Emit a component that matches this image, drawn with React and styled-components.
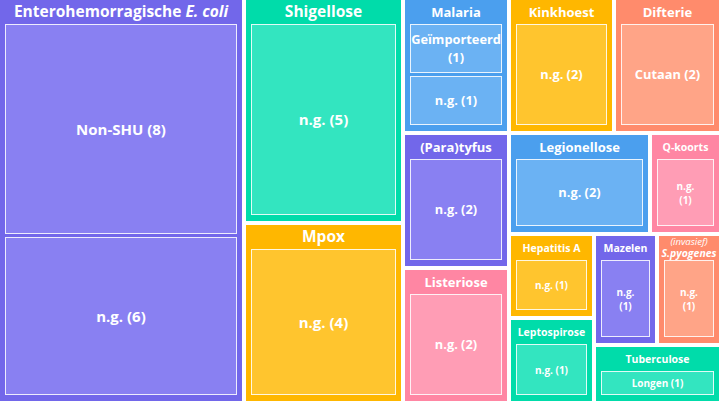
import React from "react";
import styled, { createGlobalStyle } from "styled-components";

const GlobalStyle = createGlobalStyle`
  html, body {
    margin: 0;
    padding: 0;
    background: #ffffff;
  }
  body {
    font-family: "Open Sans", "Liberation Sans", sans-serif;
  }
`;

const tones = {
  purple: { outer: "#7267ea", inner: "#8980f2" },
  teal: { outer: "#00dcaa", inner: "#33e5c0" },
  yellow: { outer: "#ffb700", inner: "#ffc52e" },
  blue: { outer: "#4b9fee", inner: "#6bb2f3" },
  salmon: { outer: "#ff8b6c", inner: "#ffa487" },
  pink: { outer: "#ff86a3", inner: "#ff9db5" },
};

const titleSizes = { lg: 15.5, md: 13, sm: 10.5 };
const labelSizes = { lg: 15, md: 12.8, sm: 10 };

const Chart = styled.div`
  display: flex;
  gap: 4px;
  width: 719px;
  height: 401px;
  overflow: hidden;
  background: #ffffff;
`;

const Column = styled.div`
  display: flex;
  flex-direction: column;
  gap: 4px;
  min-width: 0;
  min-height: 0;
  flex: ${(props) => (props.$size ? `0 0 ${props.$size}px` : "1 1 0")};
`;

const Strip = styled.div`
  display: flex;
  gap: 4px;
  min-width: 0;
  min-height: 0;
  flex: ${(props) => (props.$size ? `0 0 ${props.$size}px` : "1 1 0")};
`;

const TileBox = styled.div`
  display: flex;
  flex-direction: column;
  min-width: 0;
  min-height: 0;
  padding: 0 5px 6px;
  box-sizing: border-box;
  background: ${(props) => tones[props.$tone].outer};
  flex: ${(props) => (props.$size ? `0 0 ${props.$size}px` : "1 1 0")};
`;

const TileTitle = styled.div`
  flex: 0 0 24px;
  display: flex;
  flex-direction: column;
  align-items: center;
  justify-content: center;
  color: #ffffff;
  font-weight: 700;
  font-size: ${(props) => titleSizes[props.$size]}px;
  line-height: 1;
  white-space: nowrap;
  text-align: center;

  em {
    font-style: italic;
  }
`;

const TitleNote = styled.span`
  font-style: italic;
  font-weight: 400;
  font-size: 9.5px;
  line-height: 11px;
`;

const TitleMain = styled.span`
  font-style: italic;
  font-weight: 700;
  font-size: 10.5px;
  line-height: 13px;
`;

const TileBody = styled.div`
  flex: 1 1 0;
  display: flex;
  flex-direction: column;
  gap: 3px;
  min-height: 0;
`;

const Cell = styled.div`
  flex: ${(props) => props.$value} 1 0;
  display: flex;
  flex-direction: column;
  align-items: center;
  justify-content: center;
  min-height: 0;
  box-sizing: border-box;
  border: 1px solid rgba(255, 255, 255, 0.85);
  background: ${(props) => tones[props.$tone].inner};
  color: #ffffff;
  font-weight: 700;
  font-size: ${(props) => labelSizes[props.$size]}px;
  line-height: 1.4;
  text-align: center;
  white-space: nowrap;
`;

function Tile({ tone, size, title, items, titleSize = "md", labelSize = "md" }) {
  return (
    <TileBox $tone={tone} $size={size}>
      <TileTitle $size={titleSize}>{title}</TileTitle>
      <TileBody>
        {items.map((item, i) => (
          <Cell key={i} $tone={tone} $value={item.value} $size={labelSize}>
            {item.lines.map((line) => (
              <span key={line}>{line}</span>
            ))}
          </Cell>
        ))}
      </TileBody>
    </TileBox>
  );
}

export default function App() {
  return (
    <>
      <GlobalStyle />
      <Chart>
        <Tile
          tone="purple"
          size={242}
          titleSize="lg"
          labelSize="lg"
          title={
            <span>
              Enterohemorragische <em>E. coli</em>
            </span>
          }
          items={[
            { lines: ["Non-SHU (8)"], value: 8 },
            { lines: ["n.g. (6)"], value: 6 },
          ]}
        />
        <Column $size={155}>
          <Tile
            tone="teal"
            size={221}
            titleSize="lg"
            labelSize="lg"
            title="Shigellose"
            items={[{ lines: ["n.g. (5)"], value: 5 }]}
          />
          <Tile
            tone="yellow"
            titleSize="lg"
            labelSize="lg"
            title="Mpox"
            items={[{ lines: ["n.g. (4)"], value: 4 }]}
          />
        </Column>
        <Column>
          <Strip $size={131}>
            <Tile
              tone="blue"
              size={102}
              title="Malaria"
              items={[
                { lines: ["Geïmporteerd", "(1)"], value: 1 },
                { lines: ["n.g. (1)"], value: 1 },
              ]}
            />
            <Tile
              tone="yellow"
              size={101}
              title="Kinkhoest"
              items={[{ lines: ["n.g. (2)"], value: 2 }]}
            />
            <Tile
              tone="salmon"
              title="Difterie"
              items={[{ lines: ["Cutaan (2)"], value: 2 }]}
            />
          </Strip>
          <Strip>
            <Column $size={102}>
              <Tile
                tone="purple"
                size={131}
                title="(Para)tyfus"
                items={[{ lines: ["n.g. (2)"], value: 2 }]}
              />
              <Tile
                tone="pink"
                title="Listeriose"
                items={[{ lines: ["n.g. (2)"], value: 2 }]}
              />
            </Column>
            <Column>
              <Strip $size={97}>
                <Tile
                  tone="blue"
                  size={137}
                  title="Legionellose"
                  items={[{ lines: ["n.g. (2)"], value: 2 }]}
                />
                <Tile
                  tone="pink"
                  titleSize="sm"
                  labelSize="sm"
                  title="Q-koorts"
                  items={[{ lines: ["n.g.", "(1)"], value: 1 }]}
                />
              </Strip>
              <Strip>
                <Column $size={81}>
                  <Tile
                    tone="yellow"
                    size={80}
                    titleSize="sm"
                    labelSize="sm"
                    title="Hepatitis A"
                    items={[{ lines: ["n.g. (1)"], value: 1 }]}
                  />
                  <Tile
                    tone="teal"
                    titleSize="sm"
                    labelSize="sm"
                    title="Leptospirose"
                    items={[{ lines: ["n.g. (1)"], value: 1 }]}
                  />
                </Column>
                <Column>
                  <Strip $size={107}>
                    <Tile
                      tone="purple"
                      size={59}
                      titleSize="sm"
                      labelSize="sm"
                      title="Mazelen"
                      items={[{ lines: ["n.g.", "(1)"], value: 1 }]}
                    />
                    <Tile
                      tone="salmon"
                      titleSize="sm"
                      labelSize="sm"
                      title={
                        <>
                          <TitleNote>(invasief)</TitleNote>
                          <TitleMain>S.pyogenes</TitleMain>
                        </>
                      }
                      items={[{ lines: ["n.g.", "(1)"], value: 1 }]}
                    />
                  </Strip>
                  <Tile
                    tone="teal"
                    titleSize="sm"
                    labelSize="sm"
                    title="Tuberculose"
                    items={[{ lines: ["Longen (1)"], value: 1 }]}
                  />
                </Column>
              </Strip>
            </Column>
          </Strip>
        </Column>
      </Chart>
    </>
  );
}
